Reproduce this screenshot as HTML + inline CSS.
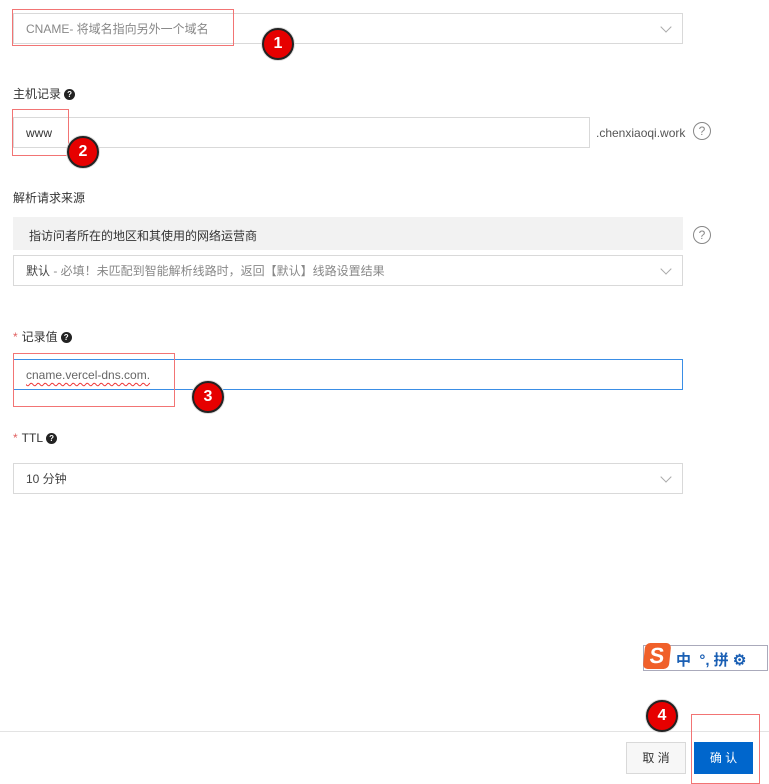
<!DOCTYPE html>
<html><head><meta charset="utf-8"><style>
body{margin:0;width:769px;height:777px;background:#fff;position:relative;overflow:hidden;font-family:"Liberation Sans","Noto Sans CJK SC",sans-serif;font-size:12px;color:#333}
.a{position:absolute}
.box{position:absolute;border:1px solid #d9d9d9;background:#fff;box-sizing:border-box}
.txt{position:absolute;left:12px;top:8px;line-height:14px}
.chev{position:absolute;right:12px;top:9px;width:7px;height:7px;border-right:1px solid #aaa;border-bottom:1px solid #aaa;transform:rotate(45deg)}
.red{position:absolute;border:1.5px solid #f27474;box-sizing:border-box}
.num{position:absolute;width:32px;height:32px;border-radius:50%;background:#e60000;border:2px solid #222;box-sizing:border-box;color:#fff;font-weight:bold;font-size:16px;text-align:center;line-height:28px;box-shadow:0 0 0 1px #ddd}
.q{display:inline-block;width:11px;height:11px;border-radius:50%;background:#222;color:#fff;font-size:8px;font-weight:bold;text-align:center;line-height:11px;vertical-align:1px;margin-left:3px}
.qo{position:absolute;width:16px;height:16px;border:1.3px solid #888;border-radius:50%;color:#888;font-size:12px;text-align:center;line-height:16px}
.lbl{position:absolute;left:13px;font-size:12px;color:#333}
.star{color:#e06060;margin-right:4px}
</style></head><body>
<div class="box" style="left:13px;top:13px;width:670px;height:31px"><span class="txt" style="color:#888">CNAME- 将域名指向另外一个域名</span><span class="chev"></span></div>
<div class="red" style="left:12px;top:9px;width:222px;height:37px"></div>
<div class="num" style="left:262px;top:28px">1</div>

<div class="lbl" style="top:85px">主机记录<span class="q">?</span></div>
<div class="box" style="left:13px;top:117px;width:577px;height:31px"><span class="txt" style="color:#333">www</span></div>
<div class="a" style="left:596px;top:126px;color:#555">.chenxiaoqi.work</div>
<div class="qo" style="left:693px;top:122px">?</div>
<div class="red" style="left:12px;top:109px;width:57px;height:47px"></div>
<div class="num" style="left:67px;top:136px">2</div>

<div class="lbl" style="top:189px">解析请求来源</div>
<div class="a" style="left:13px;top:217px;width:670px;height:33px;background:#f2f2f2"><span class="a" style="left:16px;top:10px">指访问者所在的地区和其使用的网络运营商</span></div>
<div class="qo" style="left:693px;top:226px">?</div>
<div class="box" style="left:13px;top:255px;width:670px;height:31px"><span class="txt" style="color:#888"><span style="color:#444">默认</span> - 必填！未匹配到智能解析线路时，返回【默认】线路设置结果</span><span class="chev"></span></div>

<div class="lbl" style="top:328px"><span class="star">*</span>记录值<span class="q">?</span></div>
<div class="box" style="left:13px;top:359px;width:670px;height:31px;border-color:#3a8ee6"><span class="txt" style="color:#666;text-decoration:underline wavy #e33;text-decoration-thickness:1px;text-underline-offset:3px">cname.vercel-dns.com.</span></div>
<div class="red" style="left:13px;top:353px;width:162px;height:54px"></div>
<div class="num" style="left:192px;top:381px">3</div>

<div class="lbl" style="top:431px"><span class="star">*</span>TTL<span class="q">?</span></div>
<div class="box" style="left:13px;top:463px;width:670px;height:31px"><span class="txt" style="color:#444">10 分钟</span><span class="chev"></span></div>

<div class="a" style="left:643px;top:645px;width:125px;height:26px;border:1px solid #aab;box-sizing:border-box;background:#fff"></div>
<div class="a" style="left:644px;top:643px;width:26px;height:26px;background:#f0602a;border-radius:5px;transform:skewX(-6deg);color:#fff;font-weight:bold;font-size:22px;text-align:center;line-height:26px">S</div>
<div class="a" style="left:676px;top:649px;color:#1a5fb4;font-weight:bold;font-size:15px">中 &nbsp;°, 拼 ⚙</div>

<div class="a" style="left:0;top:731px;width:769px;height:1px;background:#e3e3e3"></div>
<div class="box" style="left:626px;top:742px;width:60px;height:32px;background:#f7f7f7;text-align:center;line-height:30px;color:#333">取 消</div>
<div class="a" style="left:694px;top:742px;width:59px;height:32px;background:#0066cc;color:#fff;text-align:center;line-height:32px">确 认</div>
<div class="red" style="left:691px;top:714px;width:69px;height:70px"></div>
<div class="num" style="left:646px;top:700px">4</div>
</body></html>
